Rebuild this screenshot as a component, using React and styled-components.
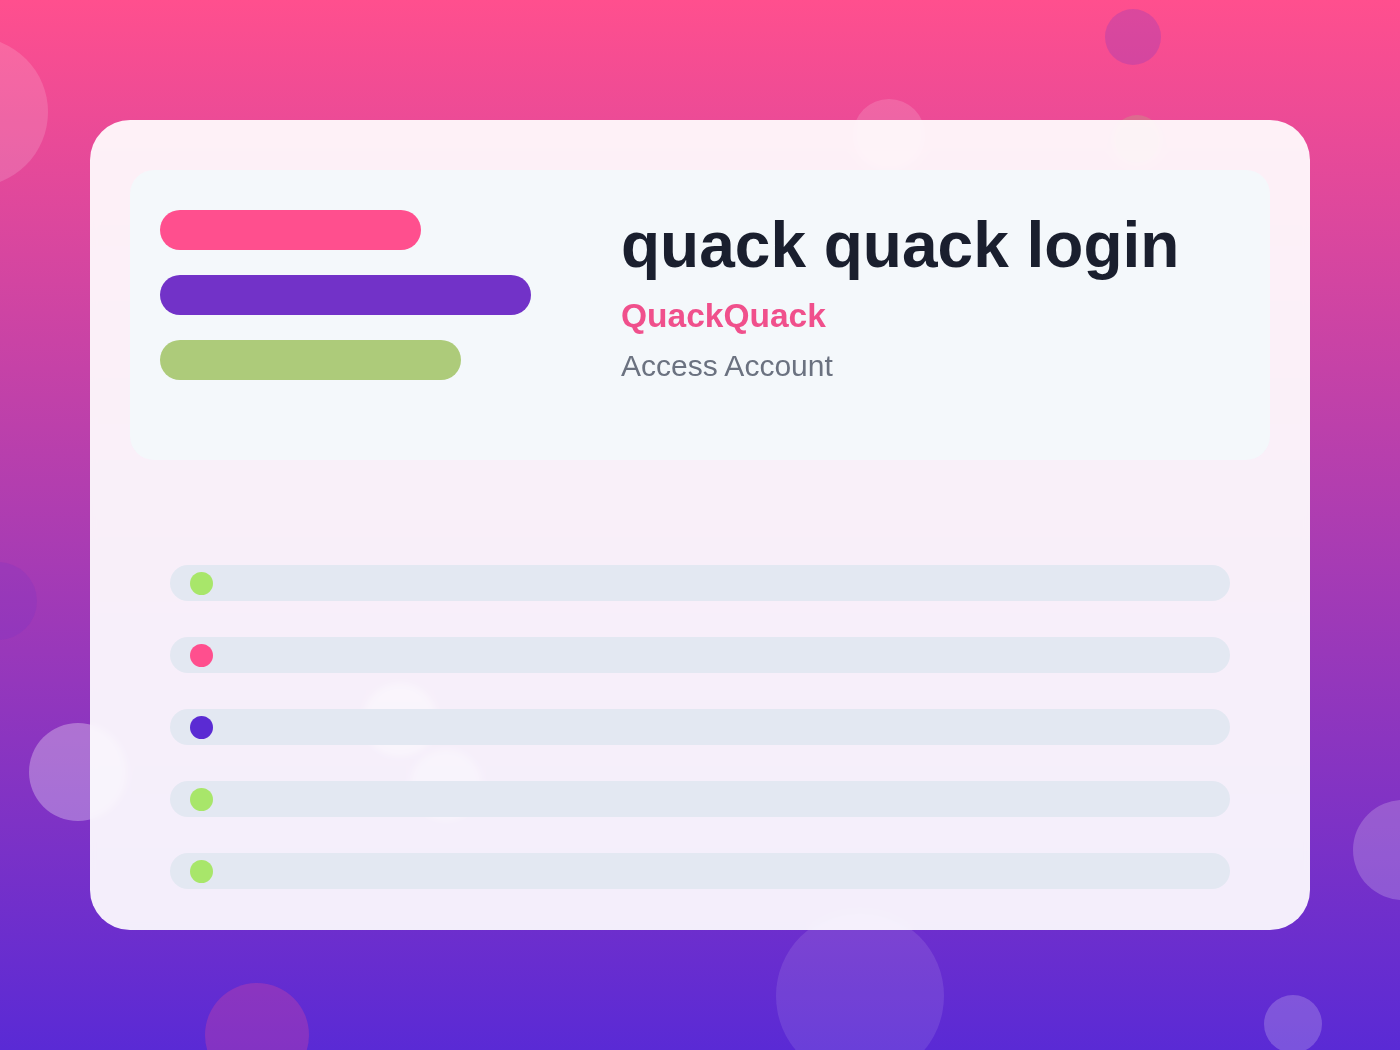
import React from 'react';
import styled, { createGlobalStyle } from 'styled-components';

const GlobalStyle = createGlobalStyle`
  * { box-sizing: border-box; }
  html, body {
    margin: 0;
    padding: 0;
    font-family: "Liberation Sans", Arial, sans-serif;
  }
`;

const bubbles = [
  { x: -27, y: 112, r: 75, color: 'rgba(255,255,255,0.15)' },
  { x: 1133, y: 37, r: 28, color: 'rgba(114,50,200,0.25)' },
  { x: 889, y: 135, r: 36, color: 'rgba(255,255,255,0.15)' },
  { x: 1137, y: 140, r: 25, color: 'rgba(173,203,122,0.25)' },
  { x: -2, y: 601, r: 39, color: 'rgba(114,50,200,0.2)' },
  { x: 78, y: 772, r: 49, color: 'rgba(255,255,255,0.3)' },
  { x: 400, y: 720, r: 37, color: 'rgba(255,255,255,0.35)' },
  { x: 446, y: 785, r: 36, color: 'rgba(255,255,255,0.3)' },
  { x: 257, y: 1035, r: 52, color: 'rgba(255,79,142,0.25)' },
  { x: 860, y: 996, r: 84, color: 'rgba(255,255,255,0.1)' },
  { x: 1403, y: 850, r: 50, color: 'rgba(255,255,255,0.2)' },
  { x: 1293, y: 1024, r: 29, color: 'rgba(255,255,255,0.2)' },
];

const bars = [
  { width: 261, color: '#ff4f8e' },
  { width: 371, color: '#7232c8' },
  { width: 301, color: '#adcb7a' },
];

const rows = ['#a8e66a', '#ff4f8e', '#5b2bd3', '#a8e66a', '#a8e66a'];

const App = () => {
  return (
    <>
      <GlobalStyle />
      <Page>
        {bubbles.map((b, i) => (
          <Bubble key={i} $x={b.x} $y={b.y} $r={b.r} $color={b.color} />
        ))}
        <Card>
          <Header>
            <BarStack>
              {bars.map((bar, i) => (
                <Bar key={i} $width={bar.width} $color={bar.color} />
              ))}
            </BarStack>
            <TitleBlock>
              <Title>quack quack login</Title>
              <Brand>QuackQuack</Brand>
              <Subtitle>Access Account</Subtitle>
            </TitleBlock>
          </Header>
          <RowList>
            {rows.map((color, i) => (
              <Row key={i}>
                <Dot $color={color} />
              </Row>
            ))}
          </RowList>
        </Card>
      </Page>
    </>
  );
};

const Page = styled.div`
  position: relative;
  min-height: 100vh;
  overflow: hidden;
  display: flex;
  align-items: center;
  justify-content: center;
  background: linear-gradient(180deg, #ff4f8e 0%, #5a2ad5 100%);
`;

const Bubble = styled.div`
  position: absolute;
  left: ${(p) => p.$x - p.$r}px;
  top: ${(p) => p.$y - p.$r}px;
  width: ${(p) => p.$r * 2}px;
  height: ${(p) => p.$r * 2}px;
  border-radius: 50%;
  background: ${(p) => p.$color};
  z-index: 0;
`;

const Card = styled.div`
  position: relative;
  z-index: 1;
  width: 1220px;
  padding: 50px 40px 41px;
  border-radius: 40px;
  background: rgba(255, 255, 255, 0.92);
  backdrop-filter: blur(3px);
`;

const Header = styled.div`
  display: flex;
  gap: 90px;
  min-height: 290px;
  padding: 40px 30px;
  border-radius: 24px;
  background: rgba(244, 248, 251, 0.97);
`;

const BarStack = styled.div`
  display: flex;
  flex-direction: column;
  gap: 25px;
  width: 371px;
  flex-shrink: 0;
`;

const Bar = styled.div`
  width: ${(p) => p.$width}px;
  height: 40px;
  border-radius: 20px;
  background: ${(p) => p.$color};
`;

const TitleBlock = styled.div`
  display: flex;
  flex-direction: column;
`;

const Title = styled.h1`
  margin: 0;
  font-size: 64px;
  line-height: 1.1;
  font-weight: 700;
  color: #1a1f2e;
`;

const Brand = styled.div`
  margin-top: 16px;
  font-size: 33.5px;
  line-height: 1.2;
  font-weight: 700;
  color: #f0508c;
`;

const Subtitle = styled.div`
  margin-top: 11px;
  font-size: 30px;
  line-height: 1.2;
  color: #6b7280;
`;

const RowList = styled.div`
  display: flex;
  flex-direction: column;
  gap: 36px;
  margin-top: 105px;
  padding: 0 40px;
`;

const Row = styled.div`
  display: flex;
  align-items: center;
  height: 36px;
  padding-left: 20px;
  border-radius: 18px;
  background: #e3e8f2;
`;

const Dot = styled.span`
  width: 23px;
  height: 23px;
  border-radius: 50%;
  background: ${(p) => p.$color};
`;

export default App;
